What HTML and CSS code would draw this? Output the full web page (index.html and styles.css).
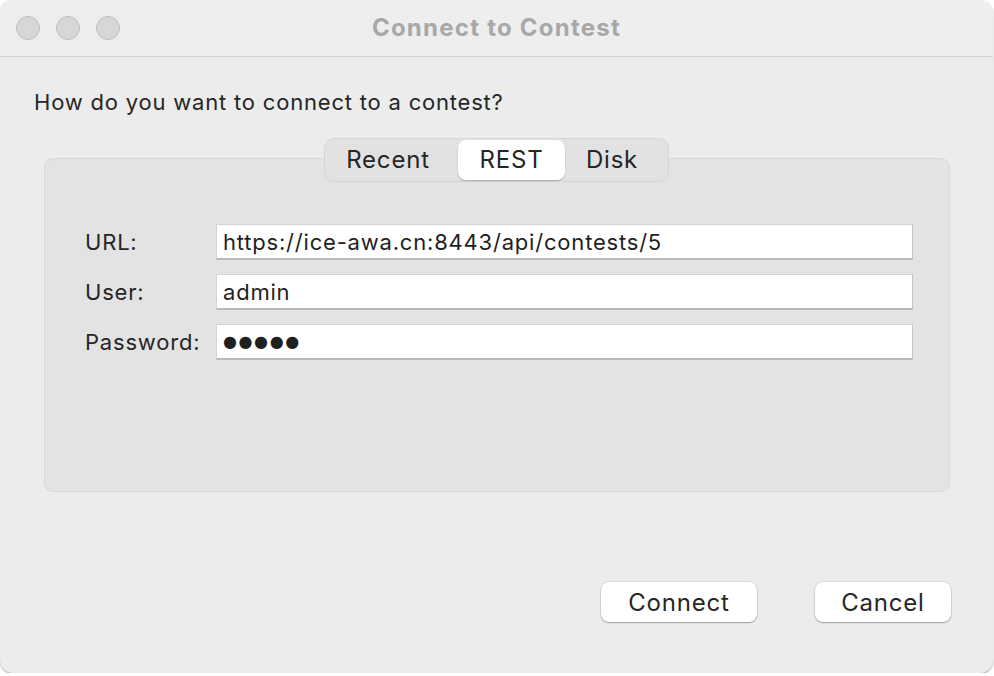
FILE: index.html
```html
<!DOCTYPE html>
<html>
<head>
<meta charset="utf-8">
<link rel="stylesheet" href="styles.css">
</head>
<body>
<div class="window">
  <div class="titlebar">
    <div class="lights">
      <span class="light"></span><span class="light"></span><span class="light"></span>
    </div>
    <div class="title">Connect to Contest</div>
    <div></div>
  </div>
  <div class="content">
    <p class="question">How do you want to connect to a contest?</p>
    <div class="tabs">
      <div class="segmented">
        <span class="seg recent">Recent</span>
        <span class="seg active">REST</span>
        <span class="seg disk">Disk</span>
      </div>
      <div class="tabbox">
        <div class="form">
          <label class="label">URL:</label>
          <div class="input">https://ice-awa.cn:8443/api/contests/5</div>
          <label class="label">User:</label>
          <div class="input">admin</div>
          <label class="label">Password:</label>
          <div class="input dots">●●●●●</div>
        </div>
      </div>
    </div>
    <div class="buttons">
      <button class="btn connect">Connect</button>
      <button class="btn cancel">Cancel</button>
    </div>
  </div>
</div>
</body>
</html>
```

FILE: styles.css
```css
* { box-sizing: border-box; }
html, body { margin: 0; padding: 0; background: #ffffff; }
body {
  font-family: Inter, "Noto Sans", "Liberation Sans", sans-serif;
  color: #262626;
}
.window {
  width: 993px;
  height: 673px;
  background: #ececec;
  border-radius: 13px;
  overflow: hidden;
  box-shadow: 0 1px 2px rgba(0,0,0,0.35);
  display: flex;
  flex-direction: column;
}
.titlebar {
  height: 57px;
  flex: none;
  display: grid;
  grid-template-columns: 1fr auto 1fr;
  align-items: center;
  background: #eeeeee;
  border-bottom: 1px solid #d3d3d3;
}
.lights {
  display: flex;
  gap: 16px;
  padding-left: 16px;
}
.light {
  width: 24px;
  height: 24px;
  border-radius: 50%;
  background: #d7d7d7;
  border: 1px solid #bdbdbd;
}
.title {
  font-size: 24px;
  font-weight: 700;
  color: #a8a8a8;
  letter-spacing: 1.25px;
  padding-bottom: 2px;
}
.content {
  flex: 1;
  padding: 0 44px 0 44px;
  display: flex;
  flex-direction: column;
}
.question {
  margin: 32px 0 0 -10px;
  font-size: 22px;
  line-height: 26px;
  letter-spacing: 0.8px;
}
.tabs {
  margin-top: 23px;
  display: flex;
  flex-direction: column;
  align-items: center;
}
.segmented {
  position: relative;
  z-index: 1;
  display: flex;
  align-items: center;
  height: 44px;
  padding: 0 9px 0 1px;
  margin-bottom: -24px;
  background: #e2e2e2;
  border: 1px solid #d6d6d6;
  border-radius: 10px;
}
.seg {
  font-size: 24px;
  letter-spacing: 0.8px;
  line-height: 40px;
  height: 40px;
  text-align: center;
  color: #262626;
}
.seg.recent { width: 124px; margin-right: 8px; }
.seg.disk { width: 94px; }
.seg.active {
  width: 107px;
  background: #ffffff;
  border-radius: 8px;
  box-shadow: 0 1px 1.5px rgba(0,0,0,0.25);
}
.tabbox {
  align-self: stretch;
  height: 334px;
  margin-right: -1px;
  background: #e3e3e3;
  border: 1px solid #d9d9d9;
  border-radius: 9px;
  padding: 65px 36px 0 40px;
}
.form {
  display: grid;
  grid-template-columns: 131px 1fr;
  row-gap: 14px;
  align-items: center;
}
.label {
  font-size: 22px;
  letter-spacing: 0.8px;
  color: #262626;
}
.input {
  height: 36px;
  background: #ffffff;
  font-size: 22px;
  letter-spacing: 0.8px;
  line-height: 34px;
  padding-left: 6px;
  border-top: 1px solid #d4d4d4;
  border-left: 1px solid #d4d4d4;
  border-right: 1px solid #c6c6c6;
  border-bottom: 2px solid #b9b9b9;
  color: #1f1f1f;
}
.input.dots {
  font-family: "DejaVu Sans", sans-serif;
  font-size: 16px;
  letter-spacing: 1.6px;
  padding-left: 6px;
}
.buttons {
  margin-top: 90px;
  display: flex;
  justify-content: flex-end;
  gap: 58px;
  margin-right: -2px;
}
.btn {
  font-family: inherit;
  font-size: 24px;
  letter-spacing: 0.8px;
  color: #262626;
  height: 40px;
  background: #ffffff;
  border: none;
  border-radius: 8px;
  box-shadow: 0 0 0 0.5px rgba(0,0,0,0.12), 0 1px 1.5px rgba(0,0,0,0.3);
  padding: 0;
}
.connect { width: 156px; }
.cancel { width: 136px; }
```
